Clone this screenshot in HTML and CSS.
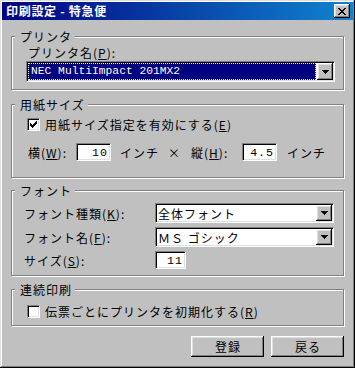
FILE: index.html
```html
<!DOCTYPE html>
<html lang="ja">
<head>
<meta charset="utf-8">
<title>印刷設定 - 特急便</title>
<link rel="stylesheet" href="styles.css">
</head>
<body>
<div class="window">
  <div class="titlebar">
    <span class="title">印刷設定 - 特急便</span>
    <span class="close-btn raised">
      <svg width="8" height="7" viewBox="0 0 8 7" shape-rendering="crispEdges"><path d="M0 0h2v1H0z M6 0h2v1H6z M1 1h2v1H1z M5 1h2v1H5z M2 2h4v1H2z M3 3h2v1H3z M2 4h4v1H2z M1 5h2v1H1z M5 5h2v1H5z M0 6h2v1H0z M6 6h2v1H6z" fill="#000"/></svg>
    </span>
  </div>
  <div class="client">
    <fieldset class="group group-printer">
      <legend>プリンタ</legend>
      <div class="inner inner-printer">
        <div class="printer-label">プリンタ名(<u>P</u>):</div>
        <div class="combo sunken combo-printer">
          <span class="combo-value selected mono">NEC MultiImpact 201MX2</span>
          <span class="drop-btn raised"><svg width="7" height="4" viewBox="0 0 7 4" shape-rendering="crispEdges"><path d="M0 0h7v1H0z M1 1h5v1H1z M2 2h3v1H2z M3 3h1v1H3z" fill="#000"/></svg></span>
        </div>
      </div>
    </fieldset>

    <fieldset class="group group-paper">
      <legend>用紙サイズ</legend>
      <div class="inner inner-paper">
        <div class="check-row">
          <span class="checkbox sunken"><svg width="9" height="9" viewBox="0 0 9 9" shape-rendering="crispEdges"><path d="M1 3h1v3H1z M2 4h1v3H2z M3 5h1v3H3z M4 4h1v3H4z M5 3h1v3H5z M6 2h1v3H6z M7 1h1v3H7z" fill="#000"/></svg></span>
          <span>用紙サイズ指定を有効にする(<u>E</u>)</span>
        </div>
        <div class="size-row">
          <span class="size-label-w">横(<u>W</u>):</span>
          <span class="edit sunken edit-w"><span class="num">10</span></span>
          <span class="unit unit-w">インチ</span>
          <span class="times">×</span>
          <span class="size-label-h">縦(<u>H</u>):</span>
          <span class="edit sunken edit-h"><span class="num">4.5</span></span>
          <span class="unit unit-h">インチ</span>
        </div>
      </div>
    </fieldset>

    <fieldset class="group group-font">
      <legend>フォント</legend>
      <div class="inner inner-font">
        <span class="font-label">フォント種類(<u>K</u>):</span>
        <div class="combo sunken combo-font">
          <span class="combo-value">全体フォント</span>
          <span class="drop-btn raised"><svg width="7" height="4" viewBox="0 0 7 4" shape-rendering="crispEdges"><path d="M0 0h7v1H0z M1 1h5v1H1z M2 2h3v1H2z M3 3h1v1H3z" fill="#000"/></svg></span>
        </div>
        <span class="font-label">フォント名(<u>F</u>):</span>
        <div class="combo sunken combo-font">
          <span class="combo-value">ＭＳ ゴシック</span>
          <span class="drop-btn raised"><svg width="7" height="4" viewBox="0 0 7 4" shape-rendering="crispEdges"><path d="M0 0h7v1H0z M1 1h5v1H1z M2 2h3v1H2z M3 3h1v1H3z" fill="#000"/></svg></span>
        </div>
        <span class="font-label">サイズ(<u>S</u>):</span>
        <div class="size-cell">
          <span class="edit sunken edit-size"><span class="num">11</span></span>
        </div>
      </div>
    </fieldset>

    <fieldset class="group group-cont">
      <legend>連続印刷</legend>
      <div class="inner inner-cont">
        <div class="check-row">
          <span class="checkbox sunken"></span>
          <span>伝票ごとにプリンタを初期化する(<u>R</u>)</span>
        </div>
      </div>
    </fieldset>

    <div class="buttons">
      <span class="button raised">登録</span>
      <span class="button raised">戻る</span>
    </div>
  </div>
</div>
</body>
</html>
```
FILE: styles.css
```css
* { box-sizing: border-box; }
html, body { margin: 0; padding: 0; }
body {
  background: #c0c0c0;
  font-family: "Noto Sans CJK JP", "Noto Sans", sans-serif;
  font-size: 12px;
  line-height: 13px;
  letter-spacing: 1px;
  color: #000;
}
u { text-decoration: underline; text-underline-offset: 1px; }

.window {
  width: 355px;
  height: 368px;
  padding: 2px;
  background: #c0c0c0;
  box-shadow: inset -1px -1px #000, inset 1px 1px #dfdfdf, inset -2px -2px #808080, inset 2px 2px #fff;
  display: flex;
  flex-direction: column;
}

.raised {
  background: #c0c0c0;
  box-shadow: inset -1px -1px #000, inset 1px 1px #fff, inset -2px -2px #808080, inset 2px 2px #dfdfdf;
}
.sunken {
  background: #fff;
  border-top: 1px solid #808080;
  border-left: 1px solid #808080;
  border-right: 1px solid #fff;
  border-bottom: 1px solid #fff;
  box-shadow: inset 1px 1px #000, inset -1px -1px #dfdfdf;
}

.titlebar {
  flex: none;
  height: 18px;
  display: flex;
  align-items: center;
  justify-content: space-between;
  padding: 0 3px 0 2px;
  background: linear-gradient(to right, #000080, #1084d0);
  color: #fff;
}
.title {
  font-weight: bold;
  letter-spacing: 0.7px;
  padding-left: 2px;
  line-height: 18px;
}
.close-btn {
  width: 16px;
  height: 14px;
  display: flex;
  align-items: center;
  justify-content: center;
}

.client {
  flex: 1;
  display: flex;
  flex-direction: column;
  padding: 10px 9px 0 9px;
}

.group {
  margin: 0;
  padding: 0;
  min-width: 0;
  border: 1px solid #808080;
  box-shadow: inset 1px 1px #fff, 1px 1px #fff;
}
.group legend {
  margin-left: 3px;
  padding: 0 3px 0 5px;
  height: 13px;
  line-height: 13px;
  background: #c0c0c0;
}
.group-paper { margin-top: 8px; }
.group-font { margin-top: 6px; }
.group-cont { margin-top: 7px; }

/* printer */
.inner-printer { padding: 3px 8px 7px 14px; }
.printer-label { margin-left: 2px; height: 13px; }
.combo {
  display: flex;
  padding: 1px;
}
.combo-printer { margin-top: 2px; height: 21px; }
.combo-value {
  flex: 1;
  display: flex;
  align-items: center;
  padding-left: 2px;
  white-space: nowrap;
  overflow: hidden;
}
.combo-value.selected {
  background: #000080;
  color: #fff;
  outline: 1px dotted #ffff80;
  outline-offset: -1px;
  margin-right: 1px;
  padding-left: 3px;
}
.mono {
  font-family: "Liberation Mono", "DejaVu Sans Mono", monospace;
  font-size: 11.3px;
  letter-spacing: 0;
}
.drop-btn {
  flex: none;
  width: 16px;
  display: flex;
  align-items: center;
  justify-content: center;
}

/* paper */
.inner-paper { padding: 7px 8px 16px 15px; }
.check-row {
  display: flex;
  align-items: center;
  gap: 5px;
  height: 13px;
}
.checkbox {
  flex: none;
  width: 13px;
  height: 13px;
  display: flex;
  align-items: center;
  justify-content: center;
  padding: 1px;
}
.size-row {
  margin-top: 12px;
  display: flex;
  align-items: center;
  height: 18px;
}
.size-label-w { margin-left: 1px; width: 48px; flex: none; }
.edit {
  flex: none;
  height: 18px;
  display: flex;
  align-items: center;
  justify-content: flex-end;
  padding: 1px 2px 1px 1px;
}
.edit-w { width: 35px; }
.edit-h { width: 35px; }
.num {
  font-family: "Liberation Mono", "DejaVu Sans Mono", monospace;
  font-size: 11.6px;
  letter-spacing: 1px;
}
.unit-w { margin-left: 9px; }
.times { margin-left: 9px; }
.size-label-h { margin-left: 10px; width: 51px; flex: none; }
.unit-h { margin-left: 10px; }

/* font */
.inner-font {
  padding: 6px 9px 6px 12px;
  display: grid;
  grid-template-columns: 131px 179px;
  grid-template-rows: 20px 20px 18px;
  row-gap: 4px;
  align-items: center;
}
.combo-font { height: 20px; }
.combo-font .combo-value { padding-left: 1px; }
.size-cell { display: flex; }
.edit-size { width: 31px; }

/* continuous */
.inner-cont { padding: 9px 8px 7px 15px; }

/* buttons */
.buttons {
  margin-top: 10px;
  display: flex;
  justify-content: flex-end;
  gap: 7px;
}
.button {
  width: 73px;
  height: 21px;
  display: flex;
  align-items: center;
  justify-content: center;
  padding-left: 1px;
}
```
